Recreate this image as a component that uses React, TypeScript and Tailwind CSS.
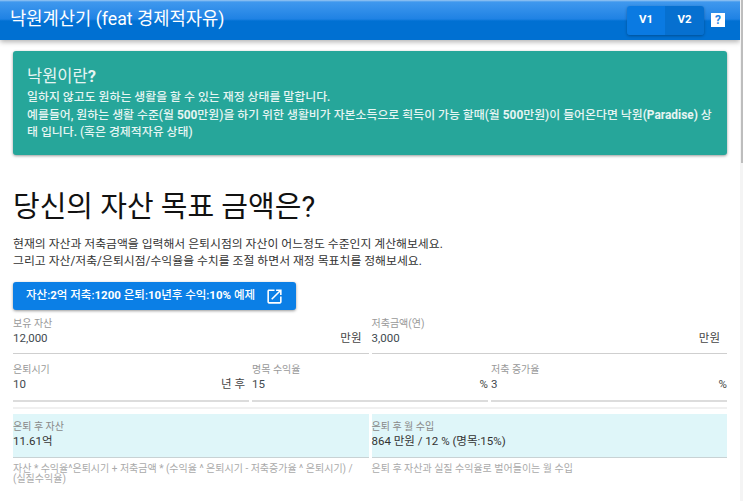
const font = { fontFamily: '"Roboto", "Noto Sans CJK KR", sans-serif' };

function Field({ label, value, unit, thick, unitPad }: { label: string; value: string; unit: string; thick?: boolean; unitPad: string }) {
    return (
        <div className={`flex-1 min-w-0 ${thick ? "h-[39px] border-b-2 border-[#dcdcdc]" : "h-[37px] border-b border-[#cfcfcf]"}`}>
            <div className="text-[10px] leading-[12px] pt-[1px] text-[#999]">{label}</div>
            <div className="flex justify-between items-center h-[17px] text-[11.5px] text-[#3f4a50]">
                <span>{value}</span>
                <span className={`text-[#444] ${unitPad}`}>{unit}</span>
            </div>
        </div>
    );
}

function Result({ label, value, help }: { label: string; value: string; help: string }) {
    return (
        <div className="flex-1 min-w-0">
            <div className="h-[44px] bg-[#dff6f9] border-b border-[#c8d2d4] pt-[7px]">
                <div className="text-[10px] leading-[12px] text-[#888]">{label}</div>
                <div className="text-[11.5px] leading-[17px] text-[#333]">{value}</div>
            </div>
            <p className="text-[10px] leading-[10px] mt-[6px] text-[#aaa] break-keep">{help}</p>
        </div>
    );
}

export default function App() {
    return (
        <div className="h-[501px] w-[743px] overflow-hidden bg-white flex" style={font}>
            <div className="w-[740px] shrink-0">
                {/* Top bar */}
                <div className="h-[40px] flex items-center pl-[10px] pr-[15px] text-white shadow-[0_2px_5px_rgba(0,0,0,0.3)] bg-[linear-gradient(#9cc8f2_0,#3f98ee_2px,#1f82e4_19px,#0070d2_21px,#0070d2_100%)]">
                    <h1 className="text-[17.7px] leading-none">낙원계산기 (feat 경제적자유)</h1>
                    <div className="ml-auto flex items-center">
                        <div className="flex shadow-[0_1px_3px_rgba(0,0,0,0.3)] rounded-[3px] h-[29px] mr-[7px]">
                            <div className="w-[38px] flex items-center justify-center bg-[#0a7ae2] rounded-l-[3px] text-[11.5px] font-bold">V1</div>
                            <div className="w-[39px] flex items-center justify-center bg-[#0670d0] rounded-r-[3px] text-[11.5px] font-bold">V2</div>
                        </div>
                        <div className="w-[14px] h-[14px] bg-white text-[#1f82e4] text-[12px] font-bold leading-[14px] text-center">?</div>
                    </div>
                </div>

                <div className="px-[13px]">
                    {/* Intro card */}
                    <div className="mt-[11px] h-[104px] bg-[#26a69a] rounded-[3px] shadow-[0_1px_3px_rgba(0,0,0,0.4)] text-[#e6f5f3] pl-[14px] pr-[14px] pt-[16px]">
                        <div className="text-[16.5px] leading-[20px]">낙원이란<b>?</b></div>
                        <p className="text-[11.9px] leading-[17.5px] mt-[2px] font-medium">
                            일하지 않고도 원하는 생활을 할 수 있는 재정 상태를 말합니다.
                            <br />
                            예를들어, 원하는 생활 수준(월 <b>500</b>만원)을 하기 위한 생활비가 자본소득으로 획득이 가능 할때(월 <b>500</b>만원)이 들어온다면 낙원<b>(Paradise)</b> 상태 입니다. (혹은 경제적자유 상태)
                        </p>
                    </div>

                    <h2 className="text-[29px] leading-[36px] mt-[34px] text-[#111]">당신의 자산 목표 금액은?</h2>
                    <p className="text-[11.85px] leading-[17px] mt-[11px] text-[#333]">
                        현재의 자산과 저축금액을 입력해서 은퇴시점의 자산이 어느정도 수준인지 계산해보세요.
                        <br />
                        그리고 자산/저축/은퇴시점/수익율을 수치를 조절 하면서 재정 목표치를 정해보세요.
                    </p>

                    <button className="mt-[12px] w-[283px] h-[28px] flex items-center pl-[13px] bg-[#0b7fe6] text-white rounded-[3px] text-[11.5px] font-medium shadow-[0_1px_3px_rgba(0,0,0,0.4)]">
                        <span>자산:<b>2</b>억 저축:<b>1200</b> 은퇴:<b>10</b>년후 수익:<b>10%</b> 예제</span>
                        <svg viewBox="0 0 24 24" className="w-[19px] h-[19px] ml-[10px] fill-current">
                            <path d="M19 19H5V5h7V3H5c-1.11 0-2 .9-2 2v14c0 1.1.89 2 2 2h14c1.1 0 2-.9 2-2v-7h-2v7zM14 3v2h3.59l-9.83 9.83 1.41 1.41L19 6.41V10h2V3h-7z" />
                        </svg>
                    </button>

                    <div className="flex gap-[3px] mt-[7px]">
                        <Field label="보유 자산" value="12,000" unit="만원" unitPad="pr-[7px]" />
                        <Field label="저축금액(연)" value="3,000" unit="만원" unitPad="pr-[7px]" />
                    </div>
                    <div className="flex gap-[3px] mt-[9px]">
                        <Field label="은퇴시기" value="10" unit="년 후" thick unitPad="pr-[4px]" />
                        <Field label="명목 수익율" value="15" unit="%" thick unitPad="" />
                        <Field label="저축 증가율" value="3" unit="%" thick unitPad="" />
                    </div>
                    <div className="h-[2px] bg-[#f0f0f0] mt-[5px]"></div>

                    <div className="flex gap-[3px] mt-[5px]">
                        <Result
                            label="은퇴 후 자산"
                            value="11.61억"
                            help="자산 * 수익율^은퇴시기 + 저축금액 * (수익율 ^ 은퇴시기 - 저축증가율 ^ 은퇴시기) / (실질수익율)"
                        />
                        <Result
                            label="은퇴 후 월 수입"
                            value="864 만원 / 12 % (명목:15%)"
                            help="은퇴 후 자산과 실질 수익율로 벌어들이는 월 수입"
                        />
                    </div>
                </div>
            </div>
            {/* Scrollbar */}
            <div className="flex-1 bg-[#f4f4f4] flex justify-end">
                <div className="w-[2px] h-[163px] bg-[#bdbdbd]"></div>
            </div>
        </div>
    );
}
